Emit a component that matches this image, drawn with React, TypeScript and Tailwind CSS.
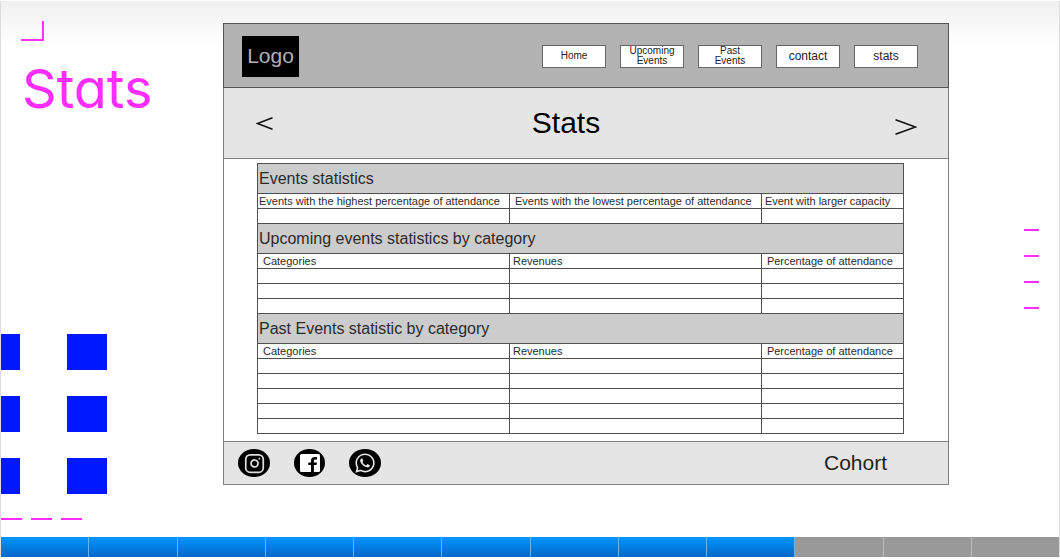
import { Instagram } from "lucide-react";
import { FaWhatsapp } from "react-icons/fa";

const navItems = [
  { label: "Home", size: "text-[10px]" },
  { label: "Upcoming Events", size: "text-[10px]" },
  { label: "Past Events", size: "text-[10px]" },
  { label: "contact", size: "text-[12px]" },
  { label: "stats", size: "text-[12px]" },
];

const sections = [
  {
    title: "Events statistics",
    columns: [
      { label: "Events with the highest percentage of attendance", pad: "pl-px" },
      { label: "Events with the lowest percentage of attendance", pad: "pl-[5px]" },
      { label: "Event with larger capacity", pad: "pl-[3px]" },
    ],
    rows: 1,
  },
  {
    title: "Upcoming events statistics by category",
    columns: [
      { label: "Categories", pad: "pl-[5px]" },
      { label: "Revenues", pad: "pl-[3px]" },
      { label: "Percentage of attendance", pad: "pl-[5px]" },
    ],
    rows: 3,
  },
  {
    title: "Past Events statistic by category",
    columns: [
      { label: "Categories", pad: "pl-[5px]" },
      { label: "Revenues", pad: "pl-[3px]" },
      { label: "Percentage of attendance", pad: "pl-[5px]" },
    ],
    rows: 5,
  },
];

const cell = "h-[15px] border border-[#505050] p-0";

function StatsTable() {
  return (
    <table className="w-full table-fixed border-collapse bg-white text-left text-[#2b2b2b]">
      <colgroup>
        <col className="w-[39%]" />
        <col className="w-[39%]" />
        <col className="w-[22%]" />
      </colgroup>
      {sections.map((section) => (
        <tbody key={section.title}>
          <tr>
            <th
              colSpan={3}
              className="h-[30px] border border-[#505050] bg-[#cccccc] p-0 pl-px text-[16px] leading-5 font-normal"
            >
              {section.title}
            </th>
          </tr>
          <tr>
            {section.columns.map((column) => (
              <th
                key={column.label}
                className={`${cell} ${column.pad} text-[11px] leading-[14px] font-normal whitespace-nowrap`}
              >
                {column.label}
              </th>
            ))}
          </tr>
          {Array.from({ length: section.rows }, (_, row) => (
            <tr key={row}>
              <td className={cell} />
              <td className={cell} />
              <td className={cell} />
            </tr>
          ))}
        </tbody>
      ))}
    </table>
  );
}

function Wireframe() {
  return (
    <div className="mt-[22px] min-w-0 flex-1 self-start border border-[#808080] bg-white font-['Liberation_Sans',Arial,sans-serif]">
      <header className="-mx-px -mt-px flex h-[65px] items-center justify-between border border-[#555555] bg-[#b2b2b2] pt-px pr-[30px] pl-[18px]">
        <div className="flex h-[41px] w-[57px] items-center justify-center bg-black text-[21px] text-[#b0b0b0]">
          Logo
        </div>
        <nav className="flex gap-[14px]">
          {navItems.map((item) => (
            <button
              key={item.label}
              type="button"
              className={`${item.size} flex h-[23px] w-16 items-center justify-center border border-[#666666] bg-white px-2 text-center leading-[10px] text-[#222222]`}
            >
              {item.label}
            </button>
          ))}
        </nav>
      </header>

      <div className="flex h-[71px] items-center justify-between border-b border-[#808080] bg-[#e5e5e5] pr-[31px] pl-8">
        <button type="button" aria-label="Previous">
          <svg width="17" height="13" viewBox="0 0 17 13" fill="none" stroke="#111" strokeWidth="1.5">
            <path d="M16.5 0.8 1.5 6.5l15 5.7" />
          </svg>
        </button>
        <h2 className="mr-9 text-[30px] leading-9 text-black">Stats</h2>
        <button type="button" aria-label="Next" className="pt-2">
          <svg width="22" height="16" viewBox="0 0 22 16" fill="none" stroke="#111" strokeWidth="1.5">
            <path d="M0.5 0.8 20.5 8l-20 7.2" />
          </svg>
        </button>
      </div>

      <div className="pt-1 pr-[44px] pb-[7px] pl-[33px]">
        <StatsTable />
      </div>

      <footer className="flex h-[43px] items-center justify-between border-t border-[#808080] bg-[#e5e5e5] pr-[61px] pl-[14px]">
        <div className="flex gap-6">
          <a href="#instagram" aria-label="Instagram" className="flex h-7 w-8 items-center justify-center rounded-[50%] bg-black text-[#dddddd]">
            <Instagram size={21} strokeWidth={2} />
          </a>
          <a href="#facebook" aria-label="Facebook" className="flex h-7 w-[31px] items-center justify-center rounded-[50%] bg-black">
            <svg width="20" height="18" viewBox="0 0 20 18">
              <rect width="20" height="18" rx="1.5" fill="#fff" />
              <path d="M11 18v-7H8.300V8.500H11V6.700C11 4.200 12.400 3 14.800 3h2.200v2.500h-1.500c-1.200 0-1.600.5-1.600 1.500v1.500h3L16.500 11h-2.600v7z" fill="#000" />
            </svg>
          </a>
          <a href="#whatsapp" aria-label="WhatsApp" className="flex h-7 w-8 items-center justify-center rounded-[50%] bg-black text-[#e5e5e5]">
            <FaWhatsapp size={22} />
          </a>
        </div>
        <span className="text-[21px] text-[#222222]">Cohort</span>
      </footer>
    </div>
  );
}

function LeftColumn() {
  return (
    <div className="flex w-[222px] shrink-0 flex-col">
      <div className="mt-5 ml-5 h-5 w-[23px] border-r-2 border-b-2 border-[#ff33ff]" />
      <h1 className="mt-5 ml-[21px] font-['Inter',sans-serif] text-[54px] leading-[56px] text-[#ff2bff] [font-feature-settings:'cv11']">
        Stats
      </h1>
      <div className="mt-[217px] flex flex-col gap-[26px]">
        {[0, 1, 2].map((row) => (
          <div key={row} className="flex gap-[47px]">
            <div className="h-9 w-[19px] bg-[#0018ff]" />
            <div className="h-9 w-10 bg-[#0018ff]" />
          </div>
        ))}
      </div>
      <div className="mt-6 mb-[17px] flex gap-[9px]">
        {[0, 1, 2].map((dash) => (
          <div key={dash} className="h-[2px] w-[21px] bg-[#ff2bff]" />
        ))}
      </div>
    </div>
  );
}

export default function App() {
  return (
    <div className="bg-white pt-px">
      <main className="border-x border-[#dddddd]">
        <div className="flex bg-[linear-gradient(to_bottom,#f0f0f0,#ffffff_45px)]">
          <LeftColumn />
          <Wireframe />
          <div className="flex w-[110px] shrink-0 flex-col items-end gap-6 pt-[228px] pr-5">
            {[0, 1, 2, 3].map((dash) => (
              <div key={dash} className="h-[2px] w-[15px] bg-[#ff2bff]" />
            ))}
          </div>
        </div>
        <div className="flex h-5">
          {Array.from({ length: 12 }, (_, index) => (
            <div
              key={index}
              className={`flex-1 border-r last:border-r-0 ${
                index < 9
                  ? "border-[#62b4f5] bg-linear-to-b from-[#0096ff] to-[#0568c8]"
                  : "border-[#bbbbbb] bg-[#999999]"
              }`}
            />
          ))}
        </div>
      </main>
    </div>
  );
}
